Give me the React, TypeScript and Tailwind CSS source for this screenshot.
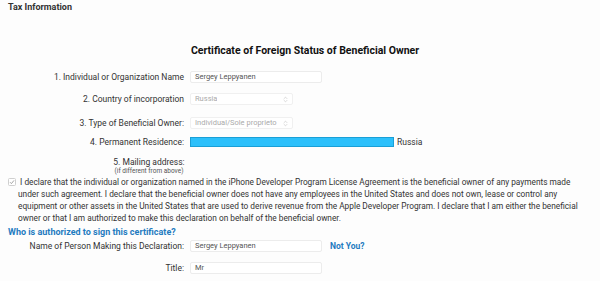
import { ChevronsUpDown } from "lucide-react";

const Label = ({ children }: { children: React.ReactNode }) => (
  <div className="w-[178px] shrink-0 pr-[2px] text-right text-[8.5px] text-[#333]">{children}</div>
);

const TextInput = ({ value }: { value: string }) => (
  <div className="ml-[4px] flex h-full w-[132px] items-center rounded-[2px] border border-[#ececec] bg-white px-[4px] text-[7.5px] text-[#555]">
    {value}
  </div>
);

const Select = ({ value }: { value: string }) => (
  <div className="ml-[4px] flex h-full w-[103px] items-center justify-between rounded-[2px] border border-[#f0f0f0] bg-white pl-[4px] pr-[3px] text-[7.5px] text-[#aaa]">
    <span className="truncate">{value}</span>
    <ChevronsUpDown size={7} strokeWidth={1.5} className="shrink-0 text-[#aaa]" />
  </div>
);

export default function App() {
  return (
    <div
      className="h-[281px] w-[600px] overflow-hidden bg-[#fdfdfd] px-2 text-[#333]"
      style={{ fontFamily: "Roboto, 'Liberation Sans', sans-serif" }}
    >
      <div className="flex h-[16px] items-center text-[9px] font-bold text-[#333]">Tax Information</div>

      <div className="mt-[28px] flex h-[14px] items-center justify-center pl-[10px] text-[10.5px] font-bold text-[#111]">
        Certificate of Foreign Status of Beneficial Owner
      </div>

      <div className="mt-[13px] flex h-[12px] items-center">
        <Label>1. Individual or Organization Name</Label>
        <TextInput value="Sergey Leppyanen" />
      </div>

      <div className="mt-[10px] flex h-[12px] items-center">
        <Label>2. Country of incorporation</Label>
        <Select value="Russia" />
      </div>

      <div className="mt-[12px] flex h-[12px] items-center">
        <Label>3. Type of Beneficial Owner:</Label>
        <Select value="Individual/Sole proprieto" />
      </div>

      <div className="mt-[8px] flex h-[10px] items-center">
        <Label>4. Permanent Residence:</Label>
        <div className="ml-[4px] h-full w-[204px] border border-[#1a9fd6] bg-[#2cc0fb]" />
        <span className="ml-[3px] text-[8.5px] text-[#333]">Russia</span>
      </div>

      <div className="mt-[11px] flex h-[17px] items-start">
        <div className="flex w-[178px] flex-col items-center pl-[104px] leading-none">
          <span className="text-[8.5px]">5. Mailing address:</span>
          <span className="mt-[1px] text-[6.5px] text-[#555]">(if different from above)</span>
        </div>
      </div>

      <div className="mt-[1px] flex items-start pr-[5px]">
        <svg width="8" height="8" viewBox="0 0 8 8" className="mt-[2px] mr-[2px] shrink-0">
          <rect x="0.5" y="0.5" width="7" height="7" rx="1" fill="#fff" stroke="#cfcfcf" />
          <path d="M2 4.2 L3.4 5.6 L6 2.4" fill="none" stroke="#9a9a9a" strokeWidth="0.9" />
        </svg>
        <p className="text-[8.3px] leading-[12px] text-[#333]">
          {"\u00a0"}I declare that the individual or organization named in the iPhone Developer Program License Agreement is the beneficial owner of any payments made under such agreement. I declare that the beneficial owner does not have any employees in the United States and does not own, lease or control any equipment or other assets in the United States that are used to derive revenue from the Apple Developer Program. I declare that I am either the beneficial owner or that I am authorized to make this declaration on behalf of the beneficial owner.
        </p>
      </div>

      <div className="mt-[3px] flex h-[12px] items-center text-[9px] font-bold text-[#1f7bc0]">
        Who is authorized to sign this certificate?
      </div>

      <div className="mt-[1px] flex h-[12px] items-center">
        <Label>Name of Person Making this Declaration:</Label>
        <TextInput value="Sergey Leppyanen" />
        <span className="ml-[8px] text-[8.5px] font-bold text-[#1f7bc0]">Not You?</span>
      </div>

      <div className="mt-[10px] flex h-[12px] items-center">
        <Label>Title:</Label>
        <TextInput value="Mr" />
      </div>
    </div>
  );
}
